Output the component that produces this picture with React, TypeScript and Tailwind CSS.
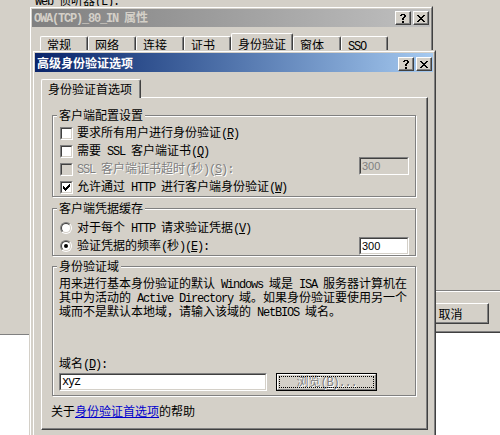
import React from "react";

// ASCII runs are drawn half-width (6px) like the SimSun latin glyphs
function Tx({ s }: { s: string }) {
  const parts = s.split(/([\x20-\x7e]+)/).filter((p) => p !== "");
  return (
    <>
      {parts.map((p, i) =>
        /^[\x20-\x7e]+$/.test(p) ? (
          <span key={i} className="font-['Liberation_Mono',monospace] tracking-[-1.2px]">
            {p}
          </span>
        ) : (
          <React.Fragment key={i}>{p}</React.Fragment>
        )
      )}
    </>
  );
}

function Key({ k }: { k: string }) {
  return (
    <span className="font-['Liberation_Mono',monospace] tracking-[-1.2px]">
      (<span className="underline underline-offset-1">{k}</span>)
    </span>
  );
}

function Pix({ rows, color = "black" }: { rows: string[]; color?: string }) {
  const w = rows[0].length;
  const h = rows.length;
  return (
    <svg width={w} height={h} viewBox={`0 0 ${w} ${h}`} shapeRendering="crispEdges">
      {rows.flatMap((r, y) =>
        r.split("").map((c, x) =>
          c === "X" ? <rect key={`${x}-${y}`} x={x} y={y} width={1} height={1} fill={color} /> : null
        )
      )}
    </svg>
  );
}

const CHECK = ["......X", ".....XX", "X...XXX", "XX.XXX.", "XXXXX..", ".XXX...", "..X...."];
const CLOSE = ["XX....XX", ".XX..XX.", "..XXXX..", "...XX...", "..XXXX..", ".XX..XX.", "XX....XX"];
const HELP = [".XXXX.", "XX..XX", "....XX", "...XX.", "..XX..", "..XX..", "......", "..XX..", "..XX.."];

function CapBtn({ kind }: { kind: "help" | "close" }) {
  return (
    <div className="w-[16px] h-[14px] bg-[#d4d0c8] border border-t-white border-l-white border-r-[#404040] border-b-[#404040] shadow-[inset_-1px_-1px_0_#808080] flex items-center justify-center">
      <Pix rows={kind === "close" ? CLOSE : HELP} />
    </div>
  );
}

function Check({ checked = false, disabled = false }: { checked?: boolean; disabled?: boolean }) {
  return (
    <div className="w-[13px] h-[13px] flex-none border border-t-[#808080] border-l-[#808080] border-r-white border-b-white">
      <div
        className={`w-full h-full border border-t-[#404040] border-l-[#404040] border-r-[#d4d0c8] border-b-[#d4d0c8] flex items-center justify-center ${
          disabled ? "bg-[#d4d0c8]" : "bg-white"
        }`}
      >
        {checked && <Pix rows={CHECK} />}
      </div>
    </div>
  );
}

function Radio({ on = false }: { on?: boolean }) {
  return (
    <div className="w-[12px] h-[12px] flex-none rounded-full border border-t-[#808080] border-l-[#808080] border-r-white border-b-white">
      <div className="w-full h-full rounded-full border border-t-[#404040] border-l-[#404040] border-r-[#d4d0c8] border-b-[#d4d0c8] bg-white flex items-center justify-center">
        {on && <div className="w-[4px] h-[4px] rounded-full bg-black" />}
      </div>
    </div>
  );
}

function NumBox({ value, disabled = false, extra = "" }: { value: string; disabled?: boolean; extra?: string }) {
  return (
    <div
      className={`ml-auto w-[50px] h-[18px] flex-none border border-t-[#808080] border-l-[#808080] border-r-white border-b-white ${extra}`}
    >
      <div
        className={`w-full h-full border border-t-[#404040] border-l-[#404040] border-r-[#d4d0c8] border-b-[#d4d0c8] pl-[1px] flex items-center font-['Liberation_Sans',sans-serif] text-[11px] ${
          disabled ? "bg-[#d4d0c8] text-[#808080]" : "bg-white text-black"
        }`}
      >
        {value}
      </div>
    </div>
  );
}

function Group({ label, className, children }: { label: string; className: string; children: React.ReactNode }) {
  return (
    <div
      className={`relative w-[364px] flex-none border border-[#808080] shadow-[inset_1px_1px_0_#fff,1px_1px_0_#fff] ${className}`}
    >
      <span className="absolute left-[4px] -top-[7px] bg-[#d4d0c8] px-[2px] leading-[12px] whitespace-nowrap">
        {label}
      </span>
      {children}
    </div>
  );
}

function OuterTab({ label, w, sel = false }: { label: string; w: string; sel?: boolean }) {
  return (
    <div
      className={`${w} ${
        sel ? "h-[23px] pt-[4px]" : "h-[20px] pt-[2px]"
      } flex-none rounded-t-[2px] border-t border-l border-r border-t-white border-l-white border-r-[#404040] shadow-[inset_-1px_0_0_#808080] pl-[6px] leading-[12px] whitespace-nowrap`}
    >
      <Tx s={label} />
    </div>
  );
}

export default function App() {
  const disabledText = "text-[#808080] [text-shadow:1px_1px_0_#fff]";

  return (
    <div className="relative w-[500px] h-[435px] overflow-hidden bg-[#d4d0c8] font-['Noto_Sans_CJK_SC',sans-serif] text-[12px] leading-[12px] text-black">
      {/* window behind */}
      <div className="absolute left-[35px] -top-[6px] whitespace-nowrap">
        <Tx s="Web 侦听器" />
        <Key k="L" />
        <Tx s=":" />
      </div>
      <div className="absolute left-0 top-[334px] w-[29px] h-[101px] bg-white border-t border-t-[#808080]" />
      <div className="absolute left-[436px] top-[290px] w-[64px] h-[2px] border-t border-t-[#808080] border-b border-b-white" />
      <div className="absolute left-[412px] top-[303px] w-[77px] h-[21px] border border-t-white border-l-white border-r-[#404040] border-b-[#404040] shadow-[inset_-1px_-1px_0_#808080] flex items-center justify-center">
        取消
      </div>
      <div className="absolute left-[436px] top-[331px] w-[64px] h-[104px] bg-white border-t border-t-[#808080] shadow-[inset_0_1px_0_#404040]" />

      {/* OWA properties window */}
      <div className="absolute left-[29px] top-[6px] w-[404px] h-[460px] border border-t-[#d4d0c8] border-l-[#d4d0c8] border-r-[#404040] border-b-[#404040]">
        <div className="h-full border border-t-white border-l-white border-r-[#808080] border-b-[#808080] p-[1px] bg-[#d4d0c8]">
          <div className="h-[18px] flex items-center bg-gradient-to-r from-[#808080] to-[#c0c0c0] pl-[2px] pr-[1px]">
            <span className="font-bold text-[#d4d0c8] whitespace-nowrap">
              <Tx s="OWA(TCP)_80_IN 属性" />
            </span>
            <div className="ml-auto flex gap-[2px]">
              <CapBtn kind="help" />
              <CapBtn kind="close" />
            </div>
          </div>
          <div className="mt-[6px] pl-[8px] h-[23px] flex items-end">
            <OuterTab label="常规" w="w-[48px]" />
            <OuterTab label="网络" w="w-[48px]" />
            <OuterTab label="连接" w="w-[48px]" />
            <OuterTab label="证书" w="w-[47px]" />
            <OuterTab label="身份验证" w="w-[62px]" sel />
            <OuterTab label="窗体" w="w-[48px]" />
            <OuterTab label="SSO" w="w-[47px]" />
          </div>
        </div>
      </div>

      {/* advanced authentication dialog */}
      <div className="absolute left-[32px] top-[50px] w-[404px] h-[430px] border border-t-[#d4d0c8] border-l-[#d4d0c8] border-r-[#404040] border-b-[#404040]">
        <div className="h-full border border-t-white border-l-white border-r-[#808080] border-b-[#808080] p-[1px] bg-[#d4d0c8]">
          <div className="h-[19px] flex items-center bg-gradient-to-r from-[#0a246a] to-[#a6caf0] pl-[2px] pr-[1px]">
            <span className="font-bold text-white whitespace-nowrap">高级身份验证选项</span>
            <div className="ml-auto self-end mb-[1px] flex gap-[2px]">
              <CapBtn kind="help" />
              <CapBtn kind="close" />
            </div>
          </div>

          <div className="mt-[7px] ml-[6px] flex flex-col">
            <div className="relative z-10 -mb-[1px] w-[100px] h-[19px] bg-[#d4d0c8] rounded-t-[2px] border-t border-l border-r border-t-white border-l-white border-r-[#404040] shadow-[inset_-1px_0_0_#808080] pl-[6px] pt-[3px] whitespace-nowrap">
              身份验证首选项
            </div>
            <div className="w-[387px] h-[333px] border border-t-white border-l-white border-r-[#404040] border-b-[#404040] shadow-[inset_-1px_-1px_0_#808080] pl-[10px] flex flex-col">
              <Group label="客户端配置设置" className="mt-[17px] h-[82px] pt-[8px] pl-[7px] pr-[6px]">
                <div className="h-[18px] flex items-center whitespace-nowrap">
                  <Check />
                  <span className="ml-[4px]">
                    <Tx s="要求所有用户进行身份验证" />
                    <Key k="R" />
                  </span>
                </div>
                <div className="h-[18px] flex items-center whitespace-nowrap">
                  <Check />
                  <span className="ml-[4px]">
                    <Tx s="需要 SSL 客户端证书" />
                    <Key k="Q" />
                  </span>
                </div>
                <div className="h-[18px] flex items-center whitespace-nowrap">
                  <Check disabled />
                  <span className={`ml-[4px] ${disabledText}`}>
                    <Tx s="SSL 客户端证书超时(秒)" />
                    <Key k="S" />
                    <Tx s=":" />
                  </span>
                  <NumBox value="300" disabled extra="-mt-[6px]" />
                </div>
                <div className="h-[18px] flex items-center whitespace-nowrap">
                  <Check checked />
                  <span className="ml-[4px]">
                    <Tx s="允许通过 HTTP 进行客户端身份验证" />
                    <Key k="W" />
                  </span>
                </div>
              </Group>

              <Group label="客户端凭据缓存" className="mt-[11px] h-[48px] pt-[10px] pl-[7px] pr-[6px]">
                <div className="h-[18px] flex items-center whitespace-nowrap">
                  <Radio />
                  <span className="ml-[5px]">
                    <Tx s="对于每个 HTTP 请求验证凭据" />
                    <Key k="V" />
                  </span>
                </div>
                <div className="h-[18px] flex items-center whitespace-nowrap">
                  <Radio on />
                  <span className="ml-[5px]">
                    <Tx s="验证凭据的频率(秒)" />
                    <Key k="E" />
                    <Tx s=":" />
                  </span>
                  <NumBox value="300" />
                </div>
              </Group>

              <Group label="身份验证域" className="mt-[10px] h-[130px] pt-[10px] pl-[6px] pr-[6px]">
                <div className="h-[80px] whitespace-nowrap">
                  <div>
                    <Tx s="用来进行基本身份验证的默认 Windows 域是 ISA 服务器计算机在" />
                  </div>
                  <div>
                    <Tx s="其中为活动的 Active Directory 域。如果身份验证要使用另一个" />
                  </div>
                  <div>
                    <Tx s="域而不是默认本地域，请输入该域的 NetBIOS 域名。" />
                  </div>
                </div>
                <div className="h-[12px] whitespace-nowrap">
                  域名
                  <Key k="D" />
                  <Tx s=":" />
                </div>
                <div className="mt-[4px] h-[18px] flex items-center">
                  <div className="w-[208px] h-[18px] border border-t-[#808080] border-l-[#808080] border-r-white border-b-white">
                    <div className="w-full h-full border border-t-[#404040] border-l-[#404040] border-r-[#d4d0c8] border-b-[#d4d0c8] bg-white pl-[1px] flex items-center">
                      <Tx s="xyz" />
                    </div>
                  </div>
                  <div className="ml-[9px] w-[101px] h-[18px] border border-black">
                    <div className="relative h-full border border-t-white border-l-white border-r-[#808080] border-b-[#808080] flex items-center justify-center">
                      <div className="absolute inset-[1px] border border-dotted border-black" />
                      <span className={`whitespace-nowrap ${disabledText}`}>
                        浏览
                        <Key k="B" />
                        <Tx s="..." />
                      </span>
                    </div>
                  </div>
                </div>
              </Group>

              <div className="mt-[9px] -ml-[1px] whitespace-nowrap">
                关于
                <span className="text-[#0000cc] underline">身份验证首选项</span>
                的帮助
              </div>
            </div>
          </div>
        </div>
      </div>
    </div>
  );
}
